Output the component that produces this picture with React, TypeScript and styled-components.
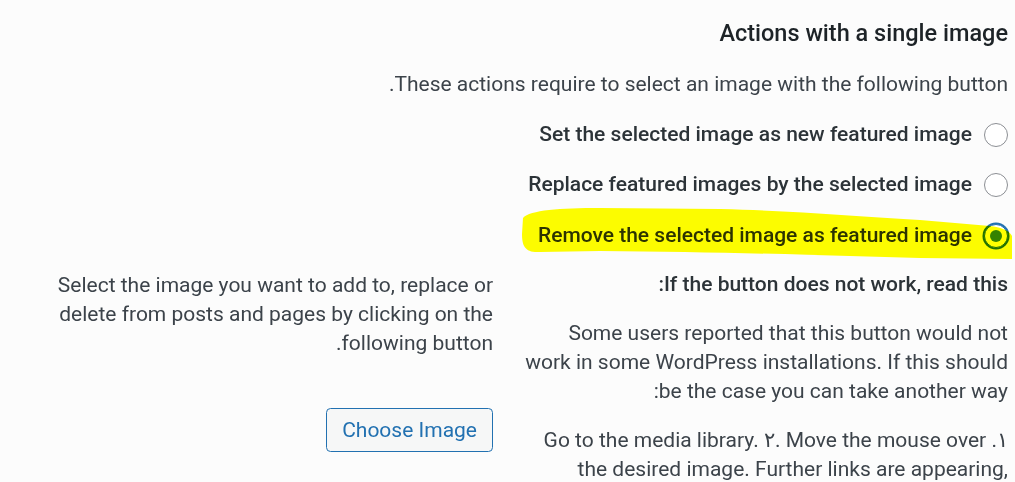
import styled, { createGlobalStyle } from "styled-components";

const GlobalStyle = createGlobalStyle`
  * { box-sizing: border-box; }
  html, body {
    margin: 0;
    background: #fcfcfc;
  }
  body {
    direction: rtl;
    font-family: Roboto, "Liberation Sans", sans-serif;
    font-size: 21px;
    line-height: 1.4;
    color: #3c434a;
  }
`;

const Page = styled.div`
  padding: 18px 7px 0 0;
  width: 1015px;
  height: 482px;
  overflow: hidden;
`;

const Title = styled.h3`
  margin: 0;
  font-size: 23.5px;
  font-weight: 500;
  line-height: 30px;
  color: #1d2327;
`;

const Lead = styled.p`
  margin: 22px 0 0;
  line-height: 29px;
`;

const Columns = styled.div`
  display: flex;
  gap: 27px;
  margin-top: 21px;
`;

const Main = styled.div`
  width: 488px;
  flex-shrink: 0;
`;

const Side = styled.div`
  width: 443px;
  padding-top: 151px;
`;

const Options = styled.fieldset`
  margin: 0;
  padding: 0;
  border: 0;
  display: flex;
  flex-direction: column;
  gap: 21.5px;
`;

const Option = styled.label`
  position: relative;
  display: flex;
  align-items: center;
  gap: 12px;
  height: 29px;
  font-weight: 500;
  color: #2c3338;
`;

const Radio = styled.span<{ $checked?: boolean }>`
  width: 24px;
  height: 24px;
  border-radius: 50%;
  flex-shrink: 0;
  background: #fff;
  border: 1.5px solid ${(p) => (p.$checked ? "#2271b1" : "#8c8f94")};
  box-shadow: ${(p) => (p.$checked ? "0 0 0 1.5px #2271b1" : "none")};
  display: flex;
  align-items: center;
  justify-content: center;
  &::before {
    content: "";
    display: ${(p) => (p.$checked ? "block" : "none")};
    width: 12px;
    height: 12px;
    border-radius: 50%;
    background: #3582c4;
  }
`;

// highlighter stroke laid over the selected option
const Marker = styled.svg`
  position: absolute;
  right: -4px;
  top: -15.5px;
  width: 492px;
  height: 55px;
  mix-blend-mode: multiply;
  pointer-events: none;
`;

const Subhead = styled.p`
  margin: 20px 0 0;
  font-weight: 500;
  color: #2c3338;
  line-height: 29px;
`;

const Text = styled.p`
  margin: 20px 0 0;
  line-height: 29px;
  &:first-child { margin-top: 0; }
`;

const Ltr = styled.span`
  direction: ltr;
  unicode-bidi: isolate;
`;

const Button = styled.button`
  margin-top: 50px;
  height: 44px;
  padding: 0 15px;
  font-family: inherit;
  font-size: 21px;
  color: #2271b1;
  background: #f6f7f7;
  border: 1.5px solid #2271b1;
  border-radius: 4.5px;
  cursor: pointer;
`;

const options = [
  { label: "Set the selected image as new featured image", checked: false },
  { label: "Replace featured images by the selected image", checked: false },
  { label: "Remove the selected image as featured image", checked: true },
];

export default function App() {
  return (
    <Page>
      <GlobalStyle />
      <Title>Actions with a single image</Title>
      <Lead>These actions require to select an image with the following button.</Lead>
      <Columns>
        <Main>
          <Options>
            {options.map((o) => (
              <Option key={o.label}>
                <Radio $checked={o.checked} />
                <span>{o.label}</span>
                {o.checked && (
                  <Marker viewBox="0 0 492 55" preserveAspectRatio="none">
                    <path
                      d="M3,12 C10,4 40,2 80,2 L200,3 C280,5 330,10 400,14 L470,20 C485,22 490,26 492,30 L492,53 L400,52 C300,49 200,46 80,45 L20,46 C5,47 2,40 2,28 Z"
                      fill="#ffff00"
                    />
                  </Marker>
                )}
              </Option>
            ))}
          </Options>
          <Subhead>If the button does not work, read this:</Subhead>
          <Text>
            Some users reported that this button would not work in some WordPress installations. If this
            should be the case you can take another way:
          </Text>
          <Text>
            ١.{" "}
            <Ltr>
              Go to the media library. ٢. Move the mouse over the desired image. Further links are
              appearing, including 'Set as featured image'.
            </Ltr>
          </Text>
        </Main>
        <Side>
          <Text>
            Select the image you want to add to, replace or delete from posts and pages by clicking on the
            following button.
          </Text>
          <Button type="button">Choose Image</Button>
        </Side>
      </Columns>
    </Page>
  );
}
